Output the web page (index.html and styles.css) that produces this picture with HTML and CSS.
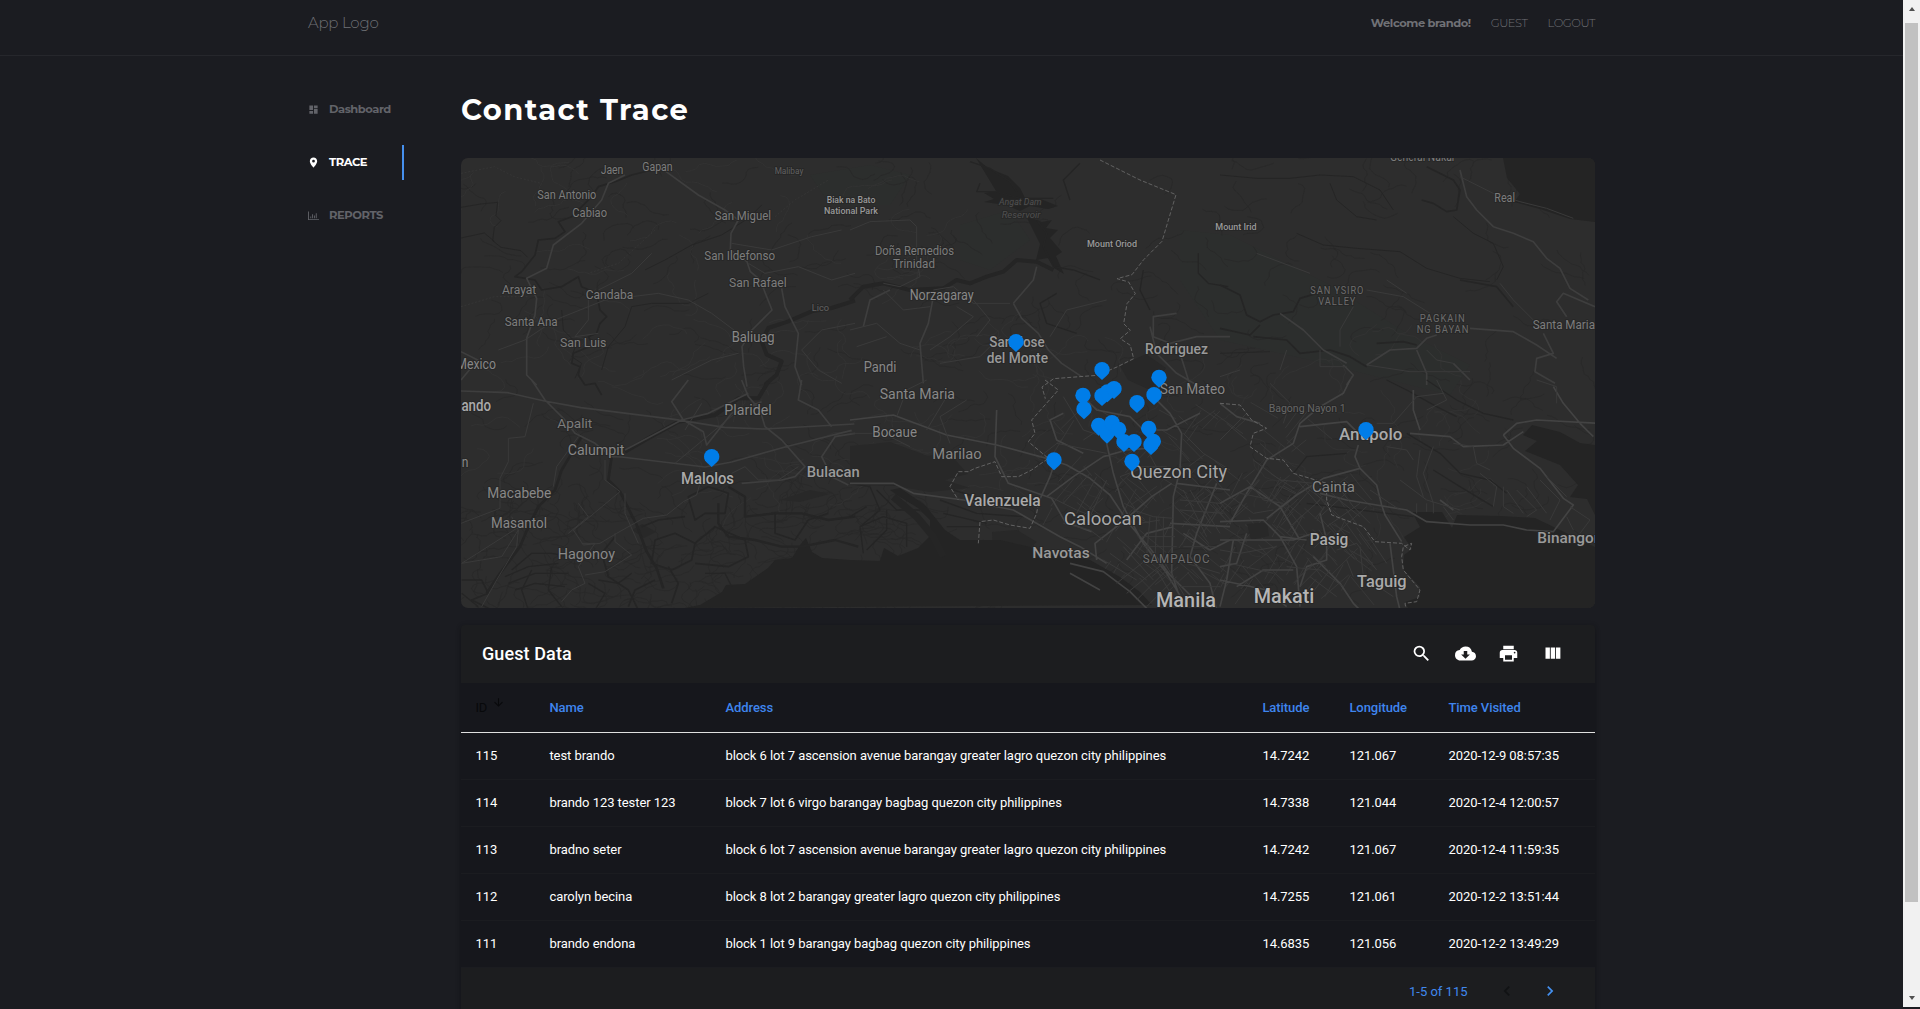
FILE: index.html
```html
<!DOCTYPE html>
<html lang="en">
<head>
<meta charset="utf-8">
<title>Contact Trace</title>
<link rel="stylesheet" href="styles.css">
</head>
<body>
<div class="page">
  <header class="topbar">
    <div class="container topbar-row">
      <a class="logo">App Logo</a>
      <nav class="usernav"><strong>Welcome brando!</strong><a class="guest">GUEST</a><a class="logout">LOGOUT</a></nav>
    </div>
  </header>
  <div class="container body-row">
    <aside class="sidebar">
      <a class="item"><svg class="ico" viewBox="0 0 24 24"><path d="M3 13h8V3H3v10zm0 8h8v-6H3v6zm10 0h8V11h-8v10zm0-18v6h8V3h-8z"/></svg><span>Dashboard</span></a>
      <a class="item active"><svg class="ico" viewBox="0 0 24 24"><path d="M12 1C7.500 1 4 4.500 4 9c0 5.800 8 14 8 14s8-8.200 8-14c0-4.500-3.500-8-8-8zm0 11a3 3 0 1 1 0-6 3 3 0 0 1 0 6z"/></svg><span>TRACE</span></a>
      <a class="item"><svg class="ico" viewBox="0 0 24 24"><path d="M0 3h2v17h22v2H0zM5 14h2v4H5zM9 9h2v9H9zM13 12h2v6h-2zM17 7h2v11h-2z"/></svg><span>REPORTS</span></a>
    </aside>
    <main class="main">
      <h1>Contact Trace</h1>
      <div class="map">
      <svg width="1134" height="450" viewBox="461 158 1134 450">
        <defs><path id="pin" d="M0-23a23 23 0 0 1 23 23c0 8-4 13-9 18L0 31-14 18c-5-5-9-10-9-18A23 23 0 0 1 0-23z"/></defs>
        <g class="park">
          <path d="M810 175l60-10 40 10-20 30-60 0zM960 225l50-15 20 30-40 30-30-10zM1180 230l50 5 100 50 80 50 60 30-20 30-80-20-60-15-90-20-40-60z"/>
        </g>
        <g id="creeks" class="creek"></g>
        <g id="lanes" class="lane"></g>
        <g id="streets" class="street"></g>
        <g class="water marsh">
          <path d="M850 446l40-4 38 14 20-4 20 22-24 6 26 8-40 4-34-6-46-1z"/>
          <path d="M992 532l25-2 20 12-18 14-26-6zM1120 366l26-12 20 14-16 22-22-10z"/>
          <path d="M1247 524l20-2 2 14-18 4zM632 530l10-6 14 8-12 6zM780 500l30-10 20 4-30 8z"/>
        </g>
        <g class="water">
          <path d="M684 608l16-3 22-13 4-7 19-1 23-16 7-8 17-2 8-13 6-7 6 14 10 6 28 2 30 1 4-13 14 8 20-8 12-12 0-16-12-12-18-11-10-7 10-2 25 17 20 25 15 10 40 0 30 7 30 8 30 5 30 17 20 15 12 13z"/>
          <path d="M1412 512l30 0 10 16 5-13 43 1 35 2 25 12 35 17v61h-187l-3-6 15-5 0-10-17-18 1-14 8-6-8-12 16-10z"/>
          <path d="M1532 425l28 7 20 11 15 2v70l-8-16-17-2 8-12-18-20-35-14 12-10-14-6z"/>
          <path d="M1503 158l4 20 13 16-6 8 26 7 30 10 25 3v-64z"/>
          <path d="M976 158l12 10 20 8 12 12 6 12 12 -2 20 8-10 3-18-3-10 5-14-6-22-3 10-3-10-6 12-2-6-10zM1026 216l16 6 10-2-6 8 12 2-8 8 12 14-6 4 8 18-10-6-6-10-12 2 4-16z"/>
        </g>
        <g transform="translate(455 150) scale(.33333)">
          <g class="river">
            <path stroke-width="5" d="M590 60l-60 15-50 20-50 15-20 30-60 60-40 15 20 30-30 20-50 5-10 45-40 50-20 15 60 10 20 30 60-10 50-30 10 30 45 20 10 50 20 20-20 20-10 30-25 10 15 25-60 25-5 30 25 10-5 25 20 30 30-5 20 35"/>
            <path stroke-width="3" d="M18 172l60-10 50-5-5 40 15 15-20 20-5 40 25 20 60 10 20 20M18 264l70-15 30 25M920 165l-40 40-80 50-90 30-80 45-60 30"/>
            <path stroke-width="12" d="M1200 452l-70 22-60 10-70 30-60 20-20 40 15 40 45 20-15 40-35 30"/>
            <path stroke-width="3" d="M320 480l5 60 40 40-15 40 30 20-20 45M760 430l-60 30-110 0-60 10-20 60-50 60-20 70"/>
          </g>
          <g class="road">
            <path class="mid" d="M620 55l110 80 80 45 40 30-22 40-2 50 50 35 10 30 30 25 15 40 20 50-60 60-30 50 5 60 10 60M510 75l-50 25-20 50-60 70-85 65-20 70-60 30 30 60-5 50-25 70v110l30 30M980 415l10 55 40 80-10 100 20 55M18 605l50 25-50 60"/>
            <path class="thin" d="M130 600l80-30 90-60 150-60 160-20 90 20 70 40 80 60M400 440l0 70-40 50 70-10M590 310l-60 60-100 50M830 280l120 20 120-40 90-20M650 690l120-60 80-20M880 340l50 30 100-20 100 40 70-20M1200 520l-100 20-60 60 50 60 70 40"/>
            <path class="dash" d="M18 70l100-20 60 30 80 20M18 470l100-30 100 0M600 240l-110 100-90 30M960 200l60-50 100-60"/>
          </g>
        </g>
        <g transform="translate(455 380) scale(.33333)">
          <g class="river">
            <path stroke-width="8" d="M470 230l-10 70 35 35 20 40 30 60 30 80 30 50 20 60M380 170l-60 100-20 60-50 50-30 60-25 60-60 80-40 60"/>
            <path stroke-width="12" d="M510 215l70-40 90-50 110-20 70-50 60 0 30-50"/>
            <path stroke-width="7" d="M820 320l50 30 0 60 90-10 80 0 80 20 80-10M790 370l0 60 30 40 80 10 80 20 60 0 100-20 70 20"/>
            <path stroke-width="5" d="M600 480l60-20 60 30-10 50-60 30-60-20zM700 350l60-30 60 20-10 60-60 0-30 20zM720 490l60-50 90 40 10 50-60 30-100-10M640 560l30 50-20 60M960 400l0 60 60 20 40-60 60-20M560 440l50-20 80-10M480 470l-40 50 20 70 60 40 30 60M600 600l-60 30-20 50M20 600l60 0 20 40-50 20 60 30"/>
            <path stroke-width="4" d="M170 570l60-50 60 0 60 10M150 590l70-30 90-10M160 610l80-30 100 0M180 630l60-20 90 10M230 570l-30 60 20 60M290 560l-10 70 40 50M20 640l50 40M750 580l60 0 20 40M400 610l50 30-30 50M430 600l60 10 40-30"/>
          </g>
          <g class="road">
            <path class="mid" d="M18 33l140 5 110 25 110 20 280 35 150 24 120 5 270-15M230 0l40 60 55 55 35 45 60 30 50 40 30 1 250 30 80-15 160-45 200-50M700 0l-50 65 35 55 60 35 10 40 75-95 90-35M510 210l170-90 80-20 120-60M860 0l20 50 35 40 15 50 50 40 70 80-30 30-40 10-120 10M1040 0l-10 60 60 30 40 50M1200 160l-60 10-40 60 30 60 50 25"/>
            <path class="thin" d="M235 70l-25 100-50 5 0 70-25 50 0 90-117 45M370 170l-65 90-10 60M450 240l0 60 45 35-90 75-50 40 30 45 50-5 50-30 80-45 70-10 50-40 40-20 20-70M510 340l0 60 40 90M170 410l20 40-50 80-120 20M20 550l165-105M190 450l-5 50-60 100-45 80M380 490l40 0-50 70 20 50-40 20-30 35M480 460l0 25 50 40-80 50-60 10M830 280l40-20 40 40 60 0 60-40M370 370l30 40-60 50M690 150l50-80M660 250l180-150"/>
          </g>
        </g>
        <g transform="translate(850 150) scale(.33333)">
          <g class="river">
            <path stroke-width="12" d="M0 450l40-40 60-10 80 20 100-5 40-25 40 10 50-20 50-15 40-35 60 5 50 25"/>
            <path stroke-width="4" d="M360 35l60 20 60 40 20 30M390 100l-10 25 60 0 70 20 100 0M560 210l30 40-10 40 30 60 60 10 80 30M1045 310l0 60 30 30 60 10M620 430l-50 30 20 60 90 30M880 360l-10 60 30 60M690 40l-50 50 20 60"/>
          </g>
          <g class="road">
            <path class="mid" d="M250 440l-15 80-25 60 10 120M490 460l25 45 50 45 30 50 40 40 60 40M120 420l-60 30-20 80M490 460l60-70 10-40M1140 560l-100 0-80 20-50-20 0-60 70-10M900 530l20 80 60 60 60 35M990 610l30 95"/>
            <path class="thin" d="M0 240l60-25 120-5 20 20 0 100 10 50-60 30-50-10M250 420l60-10 60 50 110 0M0 540l80-20 70 60 60 20M100 420l60 60 80-10M320 470l50 30-70 60-60 40M370 450l50 60-40 50M600 560l50-80 120-30M450 560l-60 60-120 20M20 590l90-30"/>
            <path class="border" d="M750 30l120 60 108 44-42 140-55 55-35 45-45 12 35 10 20 35-25 30-10 60 20 20-30 25 30 20 10 40-50 25-60 25-130 10-35 25 10 35"/>
          </g>
        </g>
        <g transform="translate(850 380) scale(.33333)">
          <g class="river"><path stroke-width="4" d="M0 310l60 10 30 70-60 50 10 80M80 330l60 60 70 0M0 410l50-30M30 440l70-30 70 20 0 70M110 390l0 60-60 60M310 330l130 40 80-10M270 360l110 40 140 10M280 400l130 30M290 440l100 0"/><path stroke-width="22" d="M130 350l70 60 50 60 30 60"/></g>
          <g class="road">
            <path d="M0 120l130-15 160 60 150 30 150 40 60 20 70 40 60 50 60 90 60 70 60 80 60 60M0 310l130 0 60 30 150 20 150 30 140 80 60 30 80 50M440 90l-5 140 40 80 130 45 40 70 80 30M560 380l40-90 20-60M590 350l80-60 90-60 70-20 60-5M700 220l-80-40-20-60 40-20M680 30l60 60 100 20 40 40 70 0 100-50M770 190l20 90 30 100 60 110 70 90 60 100M900 40l60 60 35 60-5 110-20 80-5 230 20 60M660 550l100 25 80 60 60 60M740 540l-5-50 90-70 80-70 60-40M980 310l160 20M960 430l180 10M1100 310l-60 150-20 70 60 80 20 80M1140 480l-60 30-80-50M830 540l60-80 80-20M660 580l90 50"/>
            <path class="thin" d="M600 350l80 40 100 40M640 370l80-90M680 400l60-110M720 410l50-110M640 430l80 20 40 30M850 390l60 20 60 5M870 430l60-10M900 410l-10 120M920 410l-5 130M940 410l0 130M875 470l100 0M880 500l100 0M760 540l100 60M780 520l110 80M820 500l90 100M800 610l100-80M830 640l110-90M860 660l90-90M890 680l90-90M920 570l60 100M945 550l60 100M1000 330l70 140M1020 330l60 100M1040 350l70 110M990 360l120 10M990 390l130 10M1000 500l100 0M1010 550l100 30M990 620l120 0M700 180l90-60M620 190l150 30M800 200l70 60 80 0M810 290l80-30 70 10M0 160l100 0 80 40M140 110l30-80 60-30M230 150l60-100M300 190l-30-80 80-50M640 50l60 100 60 20M880 190l50 90M1000 160l60 60 80 50"/>
            <path class="border" d="M585 0l40 30-80 90 10 40-20 25 60 50-50 35-40 20-50 0-20-45-60 20-20 10-30 0-25 45 25 40M565 370l-5 30-20 45-60-10-50-15-40 5-5 65"/>
          </g>
        </g>
        <g transform="translate(1220 150) scale(.33333)">
          <g class="river"><path stroke-width="5" d="M620 50l80 40 20 30-10 60-30 5-40-25-35-10M0 405l60 30 20 60 40 20 40-20 60-10 20-40 50-15M0 535l90 20 30-30M100 560l100 10 40 40 90-10 60 20 50 30M470 580l80-5 40 10M720 390l110 20 50 60"/>
          <path stroke-width="3" d="M230 250l80 35 100 10 130 10 80 50 100 30 90 10M0 75l110 10 100 0 90-10 100 5 80 40 40 60M330 100l20 50 60 50 60 10M700 200l60 50 60 30 30 70-20 40M0 610l150-5"/></g>
          <g class="road">
            <path class="mid" d="M440 645l70-45 80-5 30-30 30-10M720 60l20 80 30 40 50 50 60 20 60 25 40 50 40 30 30 60 55 35M1125 470l-95-40-20 25 30 45M970 550l30 60-50 15-5 40 60 35M590 600l30 70 0 35M750 535l130 10 70 40 60 40M180 490l70 50 60 60 70 40M370 645l30 30-20 30M700 640l50 50"/>
            <path class="thin" d="M720 80l100 50 80 25 80 20 80 30M440 420l110 20 80 50M500 390l60 40M840 400l40 50 60 60M200 600l-20 60M300 600v50l80 0M440 645l130 20 180 0M400 470l-40 70 0 50M620 600l30 30 50 10M0 680l60-20M110 310l160 60"/>
          </g>
        </g>
        <g transform="translate(1220 380) scale(.33333)">
          <g class="river"><path stroke-width="4" d="M500 0l60 30 90 50 60 30M620 0l90 60 80 40 90 20M560 160l100 60 60 60 90 20 50 40M640 270l80 50 100 60M380 220l-120 10-40 50M260 370l320 40"/></g>
          <g class="road">
            <path d="M0 70l50 40 70 20M390 0l-20 40-70 40-60 50-20 60-80 50-60 100-50 90M240 140l90-10 50-5 30 30-5 20M415 195l-10 35 15 35 50 50 15 60 10 30 50 80M420 265l-110 30-80 50-90 70M0 370l90-50 90 60 60 100M0 425l130-5 50 50 80 10M600 150l-20-60 0-60M570 160l120 10 40 30 120-5 60-40M850 165l40-35 60-10 190 10M850 165l30 40 80 60 70 90 30 20-60 80-80-5-70-15-100 0-130-10-60-35-180-30-80-20M700 390l-40-30M510 490l20 160 10 40M0 480l140 0 80 0 60-20M180 470l50 90 10 120M300 400l20 80 0 60-60 20-20 60M0 560l50-10 30-90M0 600l140 30 60 50M50 620l80-50 90 0M1000 20l30 50 50 60 40 40M40 480l-20 120-20 80M280 530l80 80 40 60 60 60"/>
            <path class="thin" d="M20 130l60 50M0 180l80-80M100 240l80 60 100 10M80 300l50 60 60 10M20 340l80 60 60-10M0 400l60-60 100 20M190 420l80-90M210 440l90-80M230 300l80 90M260 310l90 100M290 300l80 70 50 40M340 300l60 80 50 50M300 410l100-90M320 440l100-70M350 460l90-80M0 510l60 10M60 520l110-20M30 550l130 30M200 560l100 10 70 50M280 550l-60 60M310 550l-70 70M330 570l-70 90M270 590l80 60M350 510l60-20 60 80M380 540l20 50M420 500l10 90 90 60M440 460l60 90M540 300l80 60 100 30M450 330l90 60M590 370l0 30M620 370v25M640 370v30M670 380l30 40M600 210l-10 80 20 60M640 200l-30 80 30 90M700 190l60 10 10 50 40 20M780 280l50 40-10 60M850 320l0 60 30 20M860 330l50 70M890 330l60 60-30 20M920 320l60 80M960 300l60 60-30 60M980 290l60 60M1050 380l60 40-30 40M1040 410l20 40M500 200l60 10 20 30M470 130l50 0 70-80 80-10M650 0l30 60-60 30M150 10l60 60-20 60M950 0l60 20 0 50"/>
            <path class="border" d="M0 70l60 5 35 45 45 25-40 15-10 40 50 35 50 5 30 40 100 30 0 50 15 45 95 35 35 45 80 5 25 20 5-20-25 10-5 30 5 40 50 60-10 35-35 5 5 25"/>
          </g>
        </g>
        <g class="label" transform="translate(455 150) scale(.33333)">
          <text x="437" y="71" textLength="68">Jaen</text><text x="562" y="62" textLength="91">Gapan</text><text class="s" x="959" y="72" textLength="86">Malibay</text>
          <text x="247" y="147" textLength="177">San Antonio</text><text x="352" y="201" textLength="104">Cabiao</text><text x="779" y="210" textLength="169">San Miguel</text>
          <text class="poi" x="1115" y="159" textLength="146">Biak na Bato</text><text class="poi" x="1107" y="192" textLength="162">National Park</text>
          <text x="748" y="330" textLength="212">San Ildefonso</text><text x="822" y="412" textLength="173">San Rafael</text><text class="s" x="1070" y="483" textLength="52">Lico</text>
          <text x="141" y="431" textLength="103">Arayat</text><text x="392" y="447" textLength="143">Candaba</text><text x="149" y="528" textLength="159">Santa Ana</text><text x="315" y="590" textLength="139">San Luis</text><text class="m" x="830" y="577" textLength="129">Baliuag</text><text class="m" x="4" y="656" textLength="119">Mexico</text>
        </g>
        <g class="label" transform="translate(455 380) scale(.33333)">
          <text class="b" x="-60" y="94" textLength="168">Fernando</text><text x="307" y="145" textLength="105">Apalit</text><text class="m" x="338" y="226" textLength="170">Calumpit</text><text class="m" x="808" y="104" textLength="142">Plaridel</text><text class="b" x="678" y="311" textLength="159">Malolos</text><text class="m2" x="1055" y="291" textLength="159">Bulacan</text><text x="20" y="260" class="m" textLength="20">n</text><text class="m" x="97" y="353" textLength="192">Macabebe</text><text class="m" x="108" y="443" textLength="168">Masantol</text><text class="m" x="308" y="536" textLength="172">Hagonoy</text>
        </g>
        <g class="label" transform="translate(850 150) scale(.33333)">
          <text class="s it" x="447" y="166" textLength="128">Angat Dam</text><text class="s it" x="455" y="203" textLength="116">Reservoir</text><text class="poi" x="711" y="290" textLength="150">Mount Oriod</text><text class="poi" x="1096" y="240" textLength="124">Mount Irid</text>
          <text x="75" y="314" textLength="237">Doña Remedios</text><text x="129" y="354" textLength="126">Trinidad</text><text class="m" x="179" y="451" textLength="192">Norzagaray</text><text class="m2" x="418" y="591" textLength="166">San Jose</text><text class="m2" x="410" y="639" textLength="184">del Monte</text><text class="m" x="41" y="665" textLength="98">Pandi</text><text class="m2" x="885" y="612" textLength="189">Rodriguez</text><text class="m" x="929" y="731" textLength="196">San Mateo</text>
        </g>
        <g class="label" transform="translate(850 380) scale(.33333)">
          <text class="m" x="89" y="57" textLength="226">Santa Maria</text><text class="m" x="67" y="172" textLength="134">Bocaue</text><text class="m" x="247" y="237" textLength="148">Marilao</text><text class="b" x="343" y="377" textLength="229">Valenzuela</text><text class="l" x="642" y="436" textLength="234">Caloocan</text><text class="l" x="841" y="293" textLength="290">Quezon City</text><text class="m2" x="547" y="535" textLength="172">Navotas</text><text class="c d" x="878" y="550" textLength="204">SAMPALOC</text><text class="xl" x="918" y="681" textLength="180">Manila</text>
        </g>
        <g class="label" transform="translate(1220 150) scale(.33333)">
          <text x="510" y="34" textLength="196">General Nakar</text><text x="823" y="156" textLength="62">Real</text><text class="c" x="271" y="432" textLength="162">SAN YSIRO</text><text class="c" x="295" y="465" textLength="114">VALLEY</text><text class="c" x="599" y="515" textLength="138">PAGKAIN</text><text class="c" x="590" y="550" textLength="158">NG BAYAN</text><text x="938" y="537" textLength="187">Santa Maria</text>
        </g>
        <g class="label" transform="translate(1220 380) scale(.33333)">
          <text class="s2" x="146" y="95" textLength="231">Bagong Nayon 1</text><text class="b" x="357" y="181" textLength="190">Antipolo</text><text class="m" x="276" y="335" textLength="129">Cainta</text><text class="b" x="269" y="496" textLength="116">Pasig</text><text class="b" x="411" y="621" textLength="149">Taguig</text><text class="xl" x="101" y="670" textLength="182">Makati</text><text class="m2" x="952" y="489" textLength="195">Binangon</text>
        </g>
        <g class="pins" transform="translate(1020 340) scale(.33333)">
          <use href="#pin" x="246" y="89"/><use href="#pin" x="417" y="112"/><use href="#pin" x="402" y="164"/><use href="#pin" x="351" y="188"/><use href="#pin" x="189" y="166"/><use href="#pin" x="192" y="207"/><use href="#pin" x="246" y="167"/><use href="#pin" x="262" y="156"/><use href="#pin" x="282" y="146"/><use href="#pin" x="236" y="256"/><use href="#pin" x="261" y="280"/><use href="#pin" x="276" y="248"/><use href="#pin" x="296" y="268"/><use href="#pin" x="312" y="305"/><use href="#pin" x="342" y="305"/><use href="#pin" x="386" y="265"/><use href="#pin" x="400" y="304"/><use href="#pin" x="393" y="314"/><use href="#pin" x="336" y="364"/><use href="#pin" x="102" y="360"/><use href="#pin" x="-12" y="5"/><use href="#pin" x="-925" y="350"/><use href="#pin" x="1038" y="269"/>
        </g>
      </svg>
      </div>
      <section class="card">
        <div class="toolbar">
          <h2>Guest Data</h2>
          <div class="tools">
            <svg viewBox="0 0 24 24"><path d="M15.500 14h-.790l-.280-.270A6.470 6.470 0 0 0 16 9.500 6.500 6.500 0 1 0 9.500 16c1.610 0 3.090-.590 4.230-1.570l.270.280v.790l5 4.990L20.490 19l-4.990-5zm-6 0C7.010 14 5 11.990 5 9.500S7.010 5 9.500 5 14 7.010 14 9.500 11.990 14 9.500 14z"/></svg>
            <svg viewBox="0 0 24 24"><path d="M19.350 10.040A7.490 7.490 0 0 0 12 4C9.110 4 6.600 5.640 5.350 8.040A5.994 5.994 0 0 0 0 14c0 3.310 2.690 6 6 6h13c2.760 0 5-2.240 5-5 0-2.640-2.050-4.780-4.650-4.960zM17 13l-5 5-5-5h3V9h4v4h3z"/></svg>
            <svg viewBox="0 0 24 24"><path d="M19 8H5c-1.660 0-3 1.340-3 3v6h4v4h12v-4h4v-6c0-1.660-1.340-3-3-3zm-3 11H8v-5h8v5zm3-7c-.550 0-1-.450-1-1s.450-1 1-1 1 .450 1 1-.450 1-1 1zm-1-9H6v4h12V3z"/></svg>
            <svg viewBox="0 0 24 24"><path d="M10 18h5V5h-5v13zm-6 0h5V5H4v13zM16 5v13h5V5h-5z"/></svg>
          </div>
        </div>
        <table>
          <colgroup><col class="c1"><col class="c2"><col class="c3"><col class="c4"><col class="c5"><col class="c6"></colgroup>
          <thead><tr><th class="sorted">ID<svg viewBox="0 0 24 24"><path d="M20 12l-1.410-1.410L13 16.170V4h-2v12.170l-5.580-5.590L4 12l8 8 8-8z"/></svg></th><th>Name</th><th>Address</th><th>Latitude</th><th>Longitude</th><th>Time Visited</th></tr></thead>
          <tbody>
            <tr><td>115</td><td>test brando</td><td>block 6 lot 7 ascension avenue barangay greater lagro quezon city philippines</td><td>14.7242</td><td>121.067</td><td>2020-12-9 08:57:35</td></tr>
            <tr><td>114</td><td>brando 123 tester 123</td><td>block 7 lot 6 virgo barangay bagbag quezon city philippines</td><td>14.7338</td><td>121.044</td><td>2020-12-4 12:00:57</td></tr>
            <tr><td>113</td><td>bradno seter</td><td>block 6 lot 7 ascension avenue barangay greater lagro quezon city philippines</td><td>14.7242</td><td>121.067</td><td>2020-12-4 11:59:35</td></tr>
            <tr><td>112</td><td>carolyn becina</td><td>block 8 lot 2 barangay greater lagro quezon city philippines</td><td>14.7255</td><td>121.061</td><td>2020-12-2 13:51:44</td></tr>
            <tr><td>111</td><td>brando endona</td><td>block 1 lot 9 barangay bagbag quezon city philippines</td><td>14.6835</td><td>121.056</td><td>2020-12-2 13:49:29</td></tr>
          </tbody>
        </table>
        <div class="pager"><span>1-5 of 115</span>
          <svg class="off" viewBox="0 0 24 24"><path d="M15.410 7.410L14 6l-6 6 6 6 1.410-1.410L10.830 12z"/></svg>
          <svg viewBox="0 0 24 24"><path d="M8.590 16.590L13.170 12 8.590 7.410 10 6l6 6-6 6z"/></svg>
        </div>
      </section>
    </main>
  </div>
</div>
<div class="scroll"><i class="up"></i><i class="thumb"></i><i class="down"></i></div>
<script src="map.js"></script>
</body>
</html>
```
FILE: styles.css
```css
* { box-sizing: border-box; }
body { margin: 0; width: 1920px; height: 1009px; overflow: hidden; display: flex; background: #1b1c21; color: #fff; font-family: Montserrat, Inter, sans-serif; }
.page { width: 1903px; height: 1009px; overflow: hidden; }
.container { width: 1287px; margin-left: 308px; display: flex; }
.topbar { height: 56px; border-bottom: 1px solid #26272c; }
.topbar-row { justify-content: space-between; align-items: center; height: 46px; color: #707176; }
.logo { font-size: 15px; font-weight: 300; letter-spacing: -.2px; padding-bottom: 2px; }
.usernav { display: flex; font-size: 11.500px; font-weight: 300; gap: 20px; letter-spacing: -.45px; }
.usernav strong { font-weight: 700; }
.sidebar { width: 96px; padding-top: 36px; display: flex; flex-direction: column; gap: 18px; }
.item { height: 35px; display: flex; align-items: center; gap: 10px; font-size: 11.500px; font-weight: 700; letter-spacing: -.45px; color: #626369; }
.item span { padding-bottom: 2px; }
.item.active { color: #fff; border-right: 2px solid #4690ee; }
.ico { width: 11px; height: 11px; fill: currentColor; }
.main { width: 1134px; margin-left: 57px; }
h1 { margin: 0; height: 102px; padding-top: 35px; font-size: 29px; line-height: 37px; font-weight: 700; letter-spacing: 1.400px; white-space: nowrap; }
.map { height: 450px; border-radius: 7px; overflow: hidden; background: #2d2d2d; }
.map svg { display: block; }
.park { fill: #2c2e2d; }
.water { fill: #242424; }
.marsh { fill: #282828; }
.river, .creek { fill: none; stroke: #252525; stroke-linejoin: round; }
.creek { stroke-width: .8; stroke: #282828; }
.lane { fill: none; stroke: #343434; stroke-width: .8; }
.street { fill: none; stroke: #383838; stroke-width: 1; }
.road { fill: none; stroke: #434343; stroke-width: 5; stroke-linejoin: round; }
.road .mid { stroke: #3e3e3e; }
.road .thin { stroke: #3a3a3a; stroke-width: 3; }
.road .dash { stroke: #393939; stroke-width: 2; stroke-dasharray: 6 5; }
.road .border { stroke: #626262; stroke-width: 3; stroke-dasharray: 12 6; }
.label { font: 400 36px Roboto, sans-serif; fill: #7c7c7c; stroke: #272727; stroke-width: 6px; paint-order: stroke; stroke-linejoin: round; }
.label .s { font-size: 27px; fill: #626262; }
.label .s2 { font-size: 34px; fill: #666; }
.label .it { font-style: italic; fill: #505050; }
.label .poi { font-size: 29px; font-weight: 500; fill: #999; }
.label .c { font-size: 30px; fill: #6d6d6d; letter-spacing: 3px; }
.label .d { font-size: 36px; }
.label .m { font-size: 42px; fill: #888; }
.label .m2 { font-size: 45px; font-weight: 500; fill: #9a9a9a; }
.label .b { font-size: 47px; font-weight: 500; fill: #aaa; }
.label .l { font-size: 54px; fill: #a8a8a8; }
.label .xl { font-size: 60px; font-weight: 500; fill: #b5b5b5; }
.pins { fill: #007de8; }
.card { margin-top: 17px; height: 392px; background: #1c1d1f; border-radius: 4px 4px 0 0; box-shadow: 0 2px 4px rgba(0,0,0,.2), 0 1px 6px rgba(0,0,0,.12); font-family: Roboto, sans-serif; }
.toolbar { height: 58px; padding: 0 32px 1px 21px; display: flex; align-items: center; justify-content: space-between; }
h2 { margin: 0; font-size: 18px; font-weight: 500; letter-spacing: .1px; }
.tools { display: flex; gap: 22.700px; }
.tools svg { width: 21px; height: 21px; fill: #fff; }
table { width: 1134px; table-layout: fixed; border-collapse: separate; border-spacing: 0; background: #16171c; font-size: 13px; letter-spacing: -.06px; }
.c1 { width: 74px; } .c2 { width: 176px; } .c3 { width: 537px; } .c4 { width: 87px; } .c5 { width: 99px; }
th, td { text-align: left; padding: 0 0 0 14.400px; white-space: nowrap; }
th { height: 50px; color: #3f85ee; font-weight: 500; border-bottom: 1px solid #e0e0e0; }
th.sorted { color: #08090b; font-weight: 400; }
th svg { width: 13px; height: 13px; fill: currentColor; margin: -8px 0 0 5px; vertical-align: 3px; }
td { height: 47px; padding-bottom: 2px; border-bottom: 1px solid #1b1c20; font-weight: 400; }
.pager { height: 46px; display: flex; align-items: center; padding-left: 948px; color: #4088ee; font-size: 13px; }
.pager svg { width: 20px; height: 20px; fill: #4490f0; margin-left: 23px; }
.pager svg.off { fill: #111214; margin-left: 29px; }
.scroll { width: 17px; height: 1007px; background: #f1f1f1; display: flex; flex-direction: column; align-items: center; }
.up, .down { width: 0; height: 0; border: 3.500px solid transparent; }
.up { border-bottom: 4px solid #505050; border-top: 0; margin: 7px 0 12px; }
.thumb { width: 13px; height: 879px; background: #c1c1c1; }
.down { border-top: 4px solid #505050; border-bottom: 0; margin-top: 94px; }
```
FILE: map.js
```javascript
// Fills the land with small seeded creeks, country lanes and city streets.
let seed = 17;
const rnd = () => (seed = (seed * 16807) % 2147483647) / 2147483647;
function addPath(id, d) {
  const p = document.createElementNS('http://www.w3.org/2000/svg', 'path');
  p.setAttribute('d', d);
  document.getElementById(id).appendChild(p);
}
function scatter(id, count, x0, y0, w, h, step) {
  let d = '';
  for (let i = 0; i < count; i++) {
    let a = rnd() * 6.28;
    d += `M${(x0 + rnd() * w).toFixed(1)} ${(y0 + rnd() * h).toFixed(1)}`;
    for (let k = 0; k < 10; k++) {
      a += (rnd() - 0.5) * 1.6;
      d += `l${(Math.cos(a) * step).toFixed(1)} ${(Math.sin(a) * step * 0.7).toFixed(1)}`;
    }
  }
  addPath(id, d);
}
function grid(count, x0, y0, w, h) {
  let d = '';
  for (let i = 0; i < count; i++) {
    const a = 0.7 + (rnd() < 0.5 ? 0 : 1.57) + (rnd() - 0.5) * 0.5;
    const len = 12 + rnd() * 26;
    d += `M${(x0 + rnd() * w).toFixed(1)} ${(y0 + rnd() * h).toFixed(1)}l${(Math.cos(a) * len).toFixed(1)} ${(Math.sin(a) * len).toFixed(1)}`;
  }
  addPath('streets', d);
}
scatter('creeks', 380, 461, 158, 1134, 450, 5);
scatter('creeks', 180, 461, 490, 450, 118, 5);
scatter('lanes', 110, 620, 330, 900, 200, 6);
scatter('lanes', 60, 461, 158, 500, 300, 6);
grid(150, 1110, 470, 250, 110);
grid(60, 1050, 400, 260, 110);
document.querySelectorAll('.label text[textLength]').forEach(t => t.setAttribute('lengthAdjust', 'spacingAndGlyphs'));
```
